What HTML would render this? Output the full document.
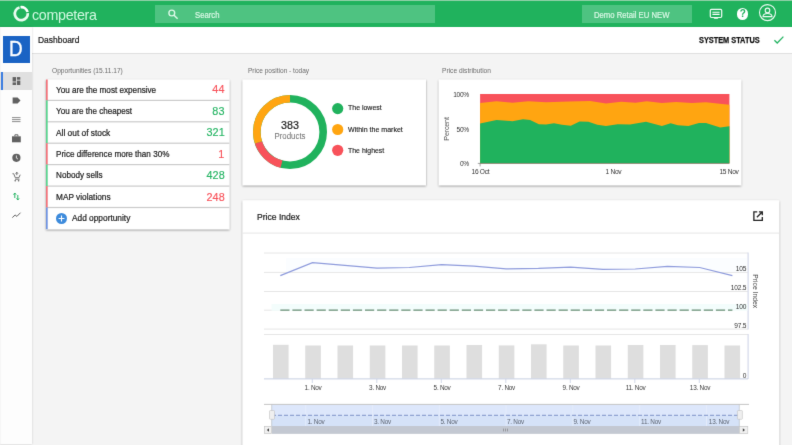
<!DOCTYPE html>
<html lang="en">
<head>
<meta charset="utf-8">
<title>Competera Dashboard</title>
<style>
*{box-sizing:border-box;margin:0;padding:0}
html,body{width:792px;height:445px;overflow:hidden;background:#f4f4f4;font-family:"Liberation Sans",sans-serif;color:#212121}
#app{position:absolute;left:0;top:0;width:792px;height:445px;overflow:hidden;background:#f4f4f4;will-change:transform;filter:url(#pb)}
.abs{position:absolute}
#top{position:absolute;left:0;top:0;width:792px;height:27px;background:#20b25d}
#top .hl{position:absolute;left:0;top:0;width:792px;height:1px;background:#8fd0a6}
.box{position:absolute;top:4.5px;height:18.5px;background:#4ec381}
.t{position:absolute;white-space:nowrap;line-height:1}
#side{position:absolute;left:0;top:27px;width:32px;height:417px;background:linear-gradient(90deg,#f3f3f3 0,#fdfdfd 1.5px);box-shadow:0 0 2px rgba(0,0,0,.18)}
#sub{position:absolute;left:32px;top:27px;width:760px;height:27px;background:#fff;border-bottom:1px solid #e0e0e0}
.card{position:absolute}
#bg{position:absolute;left:0;top:0}
.lab{position:absolute;font-size:7.3px;color:#6c6c6c;white-space:nowrap;line-height:1;transform:scaleX(.92);transform-origin:0 0;margin-top:-.8px}
.row{position:absolute;left:0;width:184px;height:21.45px}
.row span{-webkit-text-stroke:.22px #1c1c1c;position:absolute;left:9.600px;top:6.5px;font-size:9.1px;line-height:1;white-space:nowrap;color:#1c1c1c;transform:scaleX(.895);transform-origin:0 0}
.row b{-webkit-text-stroke:.15px;position:absolute;right:5.4px;top:5.3px;font-size:11.2px;font-weight:normal;line-height:1;white-space:nowrap;transform:scaleX(.97);transform-origin:100% 0}
.r{color:#f8525a}.g{color:#25b463}
.lg{-webkit-text-stroke:.15px #1c1c1c;position:absolute;left:105px;font-size:7.8px;color:#1c1c1c;transform:scaleX(.905);transform-origin:0 0;white-space:nowrap;line-height:1}
</style>
</head>
<body>
<svg width="0" height="0" style="position:absolute"><defs><filter id="pb" x="0" y="0" width="100%" height="100%" color-interpolation-filters="sRGB"><feConvolveMatrix order="3" kernelMatrix="0.0074 0.0713 0.0074 0.0713 0.6853 0.0713 0.0074 0.0713 0.0074" edgeMode="duplicate" preserveAlpha="true"/></filter></defs></svg>
<div id="app">
<div id="top"><div class="hl"></div>
  <svg class="abs" style="left:11px;top:3px" width="21" height="21" viewBox="0 0 21 21"><g transform="translate(10.3 10.7)" fill="none" stroke-width="2.700"><path d="M-1.79 -6.25 A6.5 6.5 0 1 0 6.47 -.63" stroke="#e9fbf0"/><path d="M-.79 -6.45 A6.5 6.5 0 0 1 6.28 -1.68" stroke="#fff"/></g></svg>
  <div class="t" style="left:31.700px;top:7.700px;font-size:14.200px;color:#d0f8e0;letter-spacing:-.3px;transform:scaleX(1.005);transform-origin:0 0">competera</div>
  <div class="box" style="left:155px;width:279.5px"></div>
  <svg class="abs" style="left:165.600px;top:7px" width="14" height="14" viewBox="0 0 14 14"><circle cx="5.800" cy="6" r="2.900" fill="none" stroke="#dcf8e7" stroke-width="1.400"/><path d="M8 8.200l3.600 3.600" stroke="#dcf8e7" stroke-width="1.500" fill="none"/></svg>
  <div class="t" style="left:194.8px;top:11.3px;font-size:8.3px;color:#dcf8e7;-webkit-text-stroke:.18px #dcf8e7;transform:scaleX(.93);transform-origin:0 0">Search</div>
  <div class="box" style="left:582px;width:110px"></div>
  <div class="t" style="left:593.6px;top:11.100px;font-size:8.3px;color:#dcf8e7;-webkit-text-stroke:.18px #dcf8e7;transform:scaleX(.93);transform-origin:0 0">Demo Retail EU NEW</div>
  <svg class="abs" style="left:708px;top:7px" width="16" height="14" viewBox="0 0 16 14"><rect x="2.3" y="2.3" width="11.4" height="8.2" rx="1.2" fill="none" stroke="#f4fcf7" stroke-width="1.2"/><path d="M4.4 5.2h7.2M4.4 7.4h7.2" stroke="#fff" stroke-width="1.1"/><path d="M5.6 11.2h4.8l-.8.9h-3.200z" fill="#fff"/></svg>
  <div class="abs" style="left:736.8px;top:8.200px;width:11.4px;height:11.4px;border-radius:50%;background:#fff"></div>
  <div class="t" style="left:739.700px;top:9px;font-size:10px;font-weight:bold;color:#20b25d">?</div>
  <svg class="abs" style="left:758px;top:3px" width="19" height="19" viewBox="0 0 19 19"><circle cx="9.5" cy="9.600" r="8" fill="none" stroke="#eefaf3" stroke-width="1.1"/><circle cx="9.5" cy="7.400" r="2.300" fill="none" stroke="#eefaf3" stroke-width="1.1"/><path d="M5 13.600c0-2.300 2.200-3.100 4.500-3.100s4.500.8 4.500 3.100z" fill="none" stroke="#eefaf3" stroke-width="1.1"/></svg>
</div>

<div id="sub">
  <div class="t" style="left:5.500px;top:9.200px;font-size:9.200px;color:#1a1a1a;-webkit-text-stroke:.22px #1a1a1a;transform:scaleX(.92);transform-origin:0 0">Dashboard</div>
  <div class="t" style="left:666.500px;top:8.800px;font-size:8.500px;font-weight:bold;color:#111;-webkit-text-stroke:.25px #111;transform:scaleX(.865);transform-origin:0 0">SYSTEM STATUS</div>
  <svg class="abs" style="left:741px;top:8px" width="12" height="10" viewBox="0 0 12 10"><path d="M1.400 5.200l2.800 2.800L10.400 1.600" fill="none" stroke="#25b463" stroke-width="1.300"/></svg>
</div>

<div id="side">
  <div class="abs" style="left:3px;top:9.400px;width:27px;height:26.400px;background:#1a63c4"></div>
  <div class="t" style="left:9px;top:11.100px;font-size:22.500px;color:#fff;-webkit-text-stroke:.35px #fff;transform:scaleX(.84);transform-origin:0 0">D</div>
  <div class="abs" style="left:0;top:44.700px;width:32px;height:18.700px;background:#e0e0e0"></div>
  <div class="abs" style="left:.6px;top:44.700px;width:2.200px;height:18.700px;background:#3c7de0"></div>
  <svg class="abs" style="left:0;top:0" width="32" height="416" viewBox="0 27 32 416">
    <g fill="#616161">
      <rect x="12.600" y="77.100" width="3.400" height="4.400"/><rect x="16.900" y="77.100" width="3.400" height="2.600"/><rect x="12.600" y="82.400" width="3.400" height="2.600"/><rect x="16.900" y="80.600" width="3.400" height="4.400"/>
      <path d="M12.600 97.400h5l2.900 3.100-2.900 3.100h-5z"/>
      <rect x="12" y="117.200" width="8.500" height=".9" opacity=".8"/><rect x="12" y="119.200" width="8.500" height=".9" opacity=".8"/><rect x="12" y="121.200" width="8.500" height=".9" opacity=".8"/>
      <path d="M12 136.300h8.800v6H12z"/><path d="M14.900 136.300v-1.500h3v1.500" fill="none" stroke="#616161" stroke-width="1"/>
      <circle cx="16.400" cy="157.800" r="4.100"/>
    </g>
    <path d="M16.400 155.500v2.600l1.600 1" stroke="#fff" stroke-width=".8" fill="none"/>
    <path d="M12.500 173.700h1.200l1.600 4h3.600l1.300-3M15 179.200h4.500M16.800 172.200v3M15.600 173.700l1.200-1.400 1.200 1.400" stroke="#616161" stroke-width=".9" fill="none"/>
    <circle cx="15.200" cy="180.800" r=".8" fill="#616161"/><circle cx="18.600" cy="180.800" r=".8" fill="#616161"/>
    <path d="M14.800 193.200v4.800M13.500 194.600l1.300-1.600 1.300 1.600M17.800 195v4.800M16.500 198.400l1.300 1.600 1.300-1.600" stroke="#25b463" stroke-width="1" fill="none"/>
    <path d="M12.300 217.600l2.800-2.600 1.800 1.400 3.600-3.700" stroke="#616161" stroke-width="1" fill="none"/>
  </svg>
</div>

<svg id="bg" width="792" height="445" viewBox="0 0 792 445">
  <defs><filter id="sh" x="-5%" y="-5%" width="110%" height="115%"><feGaussianBlur in="SourceAlpha" stdDeviation=".9"/><feOffset dy=".7"/><feComponentTransfer><feFuncA type="linear" slope=".42"/></feComponentTransfer><feMerge><feMergeNode/><feMergeNode in="SourceGraphic"/></feMerge></filter></defs>
  <g fill="#fff" filter="url(#sh)">
    <rect x="46" y="79.500" width="183.400" height="149.700"/>
    <rect x="242.600" y="79.500" width="183.400" height="105.700"/>
    <rect x="438.800" y="79.500" width="302.400" height="105.700"/>
    <rect x="242.600" y="200.300" width="536.500" height="260"/>
  </g>
  <g fill="#cbcbcb"><rect x="46" y="99.800" width="183.400" height="1.200"/><rect x="46" y="121.200" width="183.400" height="1.200"/><rect x="46" y="142.600" width="183.400" height="1.200"/><rect x="46" y="164" width="183.400" height="1.200"/><rect x="46" y="185.500" width="183.400" height="1.200"/><rect x="46" y="206.900" width="183.400" height="1.200"/></g>
  <rect x="46" y="79.500" width="1.700" height="20.900" fill="#f2727a"/>
  <rect x="46" y="100.400" width="1.700" height="42.800" fill="#5ad48f"/>
  <rect x="46" y="143.200" width="1.700" height="21.400" fill="#f2727a"/>
  <rect x="46" y="164.600" width="1.700" height="21.500" fill="#5ad48f"/>
  <rect x="46" y="186.100" width="1.700" height="21.400" fill="#f2727a"/>
  <rect x="46" y="207.500" width="1.700" height="21.700" fill="#6f93e2"/>
  <rect x="242.600" y="232.600" width="536.500" height="1" fill="#e6e6e6"/>
</svg>

<div class="lab" style="left:52px;top:68px;transform:scaleX(.906)">Opportunities (15.11.17)</div>
<div class="card" style="left:46px;top:79.200px;width:184px;height:150px">
  <div class="row" style="top:0.0px"><span style="transform:scaleX(0.895)">You are the most expensive</span><b class="r">44</b></div>
  <div class="row" style="top:21.45px"><span style="transform:scaleX(0.888)">You are the cheapest</span><b class="g">83</b></div>
  <div class="row" style="top:42.9px"><span style="transform:scaleX(0.918)">All out of stock</span><b class="g">321</b></div>
  <div class="row" style="top:64.35px"><span style="transform:scaleX(0.891)">Price difference more than 30%</span><b class="r">1</b></div>
  <div class="row" style="top:85.8px"><span style="transform:scaleX(0.895)">Nobody sells</span><b class="g">428</b></div>
  <div class="row" style="top:107.25px"><span style="transform:scaleX(0.91)">MAP violations</span><b class="r">248</b></div>
  <div class="row" style="top:128.700px;height:21.300px">
    <div class="abs" style="left:9.500px;top:4.800px;width:11.400px;height:11.400px;border-radius:50%;background:#3d8bdc"></div>
    <svg class="abs" style="left:9.700px;top:5px" width="11" height="11" viewBox="0 0 11 11"><path d="M5.500 2.600v5.800M2.600 5.500h5.800" stroke="#fff" stroke-width="1.100"/></svg>
    <span style="left:26.200px;top:6.300px;transform:scaleX(.915)">Add opportunity</span></div>
</div>

<div class="lab" style="left:248px;top:68px;transform:scaleX(.897)">Price position - today</div>
<div class="card" style="left:243px;top:79.200px;width:183px;height:106.500px">
  <svg class="abs" style="left:0;top:0" width="183" height="106" viewBox="243 79 183 106">
    <g fill="none" stroke-width="7.600" transform="rotate(-90 290 132)">
      <circle cx="290" cy="132" r="33.200" stroke="#20b25d"/>
      <circle cx="290" cy="132" r="33.200" stroke="#f8525a" stroke-dasharray="32.850 500" stroke-dashoffset="-112.760"/>
      <circle cx="290" cy="132" r="33.200" stroke="#ffa511" stroke-dasharray="63 500" stroke-dashoffset="-145.610"/>
    </g>
    <circle cx="337.700" cy="108.600" r="5.600" fill="#20b25d"/>
    <circle cx="337.700" cy="129.500" r="5.600" fill="#ffa511"/>
    <circle cx="337.700" cy="150.300" r="5.600" fill="#f8525a"/>
  </svg>
  <div class="t" style="left:27px;top:40.600px;width:40px;text-align:center;font-size:11.2px;color:#1c1c1c;-webkit-text-stroke:.2px #1c1c1c;transform:scaleX(.96)">383</div>
  <div class="t" style="left:22px;top:53px;width:50px;text-align:center;font-size:8.3px;color:#6c6c6c;transform:scaleX(.95)">Products</div>
  <div class="lg" style="top:25.200px;transform:scaleX(.893)">The lowest</div>
  <div class="lg" style="top:46.800px;transform:scaleX(.903)">Within the market</div>
  <div class="lg" style="top:67.700px;transform:scaleX(.89)">The highest</div>
</div>

<div class="lab" style="left:442px;top:68px;transform:scaleX(.908)">Price distribution</div>
<div class="card" style="left:439px;top:79.200px;width:302.500px;height:106.500px">
  <svg class="abs" style="left:0;top:0" width="302" height="106" viewBox="439 79 302 106" font-family="Liberation Sans, sans-serif">
    <rect x="480.100" y="94" width="249.300" height="69.200" fill="#f8525a"/>
    <path d="M480.1 103.0 L496.5 101.3 L512.4 102.7 L528.3 101.3 L546 102.3 L569 101.4 L590.2 100.9 L606 103.5 L621.2 101.8 L635.4 102.7 L646.8 101.3 L661.9 103.0 L676 102.1 L691.9 103 L706 102.3 L722 104.1 L729.4 104.8 V163.2 H480.1z" fill="#ffa511"/>
    <path d="M480.1 123.4 L496.5 120 L512.4 121.2 L523 119.3 L530.1 120 L538.9 124.2 L546 124.6 L554 123.2 L561.9 124.8 L570.8 125.7 L579.6 121.6 L588.4 121.8 L597.3 124.8 L606 126.1 L617.7 124.2 L630 124.6 L646 121.8 L661.9 126 L670.7 123.2 L677.8 125.3 L688.4 126 L699 123 L706 123 L720.2 127.4 L729.4 126.2 V163.2 H480.1z" fill="#20b25d"/>
    <path d="M477.800 163.400h251.600M480.100 163.400v3" stroke="#666" stroke-width=".6" fill="none"/>
    <g font-size="6.600" fill="#333" letter-spacing="-.3">
    <text x="468.900" y="97.200" text-anchor="end">100%</text>
    <text x="468.900" y="131.700" text-anchor="end">50%</text>
    <text x="468.900" y="166.100" text-anchor="end">0%</text>
    <text x="480.400" y="174.200" text-anchor="middle">16 Oct</text>
    <text x="613.400" y="174.200" text-anchor="middle">1 Nov</text>
    <text x="729" y="174.200" text-anchor="middle">15 Nov</text>
    <text x="448.900" y="129" text-anchor="middle" font-size="7.200" fill="#555" letter-spacing="-.2" transform="rotate(-90 448.900 129)">Percent</text>
    </g>
  </svg>
</div>

<div class="card" style="left:242px;top:201px;width:537px;height:260px">
  <div class="t" style="left:14.900px;top:11.500px;font-size:9.200px;color:#1a1a1a;-webkit-text-stroke:.22px #1a1a1a;transform:scaleX(.932);transform-origin:0 0">Price Index</div>
  <svg class="abs" style="left:510.200px;top:8.800px" width="12.200" height="12.200" viewBox="0 0 13 13"><path d="M5.600 2H2v9h9V7.400" fill="none" stroke="#222" stroke-width="1.400"/><path d="M7.400 2H11v3.600M10.800 2.200L5.200 7.800" fill="none" stroke="#222" stroke-width="1.400"/></svg>
  
  <svg class="abs" style="left:0;top:0" width="537" height="245" viewBox="242 201 537 245" font-family="Liberation Sans, sans-serif">
    <g stroke="#e6e6e6" stroke-width="1" fill="none">
      <path d="M264 253h484M264 272.400h484M264 291.500h484M264 310.200h16M264 329.100h484"/>
      <path d="M264 334.500h484"/>
    </g>
    <path d="M748.100 252.500v77M748.100 334v45" stroke="#d5d9ea" stroke-width="1.200" fill="none"/>
    <rect x="271.500" y="304" width="476" height="6.800" fill="#f3fdfc"/><rect x="286" y="258" width="461" height="14" fill="#fbfdff"/>
    <path d="M280.300 310.200h452.100" stroke="#668c72" stroke-width="1.200" stroke-dasharray="9.200 2.900" fill="none"/>
    <path d="M280.300 275.600 L312.500 262.700 L344.800 265.300 L377 268.200 L409.300 267.500 L441.600 264.600 L473.800 266.200 L506.100 268.800 L538.400 268.400 L570.600 267.200 L602.900 269.300 L635.200 269 L667.400 266.400 L699.700 267.500 L732.400 275.600" stroke="#8e9bdc" stroke-width="1.250" fill="none"/>
    <g fill="#dedede"><rect x="273.00" y="344.8" width="15.6" height="33.8"/><rect x="305.25" y="345.5" width="15.6" height="33.1"/><rect x="337.50" y="345.5" width="15.6" height="33.1"/><rect x="369.75" y="345.5" width="15.6" height="33.1"/><rect x="402.00" y="345.5" width="15.6" height="33.1"/><rect x="434.25" y="345.5" width="15.6" height="33.1"/><rect x="466.50" y="345.0" width="15.6" height="33.6"/><rect x="498.75" y="345.4" width="15.6" height="33.2"/><rect x="531.00" y="344.3" width="15.6" height="34.3"/><rect x="563.25" y="345.5" width="15.6" height="33.1"/><rect x="595.50" y="345.5" width="15.6" height="33.1"/><rect x="627.75" y="345.0" width="15.6" height="33.6"/><rect x="660.00" y="345.0" width="15.6" height="33.6"/><rect x="692.25" y="345.1" width="15.6" height="33.5"/><rect x="724.50" y="345.5" width="15.6" height="33.1"/></g>
    <path d="M264 378.900h484" stroke="#c6cee2" stroke-width="1"/>
    <g stroke="#c6cee2" stroke-width=".8"><path d="M312.300 379v4M376.800 379v4M441.300 379v4M505.800 379v4M570.300 379v4M634.800 379v4M699.300 379v4"/></g>
    <g font-size="6.400" fill="#3a3a3a" text-anchor="middle" letter-spacing="-.25">
      <text x="313.100" y="389.500">1. Nov</text><text x="377.600" y="389.500">3. Nov</text><text x="442.100" y="389.500">5. Nov</text><text x="506.600" y="389.500">7. Nov</text><text x="571.100" y="389.500">9. Nov</text><text x="635.600" y="389.500">11. Nov</text><text x="700" y="389.500">13. Nov</text>
    </g>
    <g font-size="6.600" fill="#333" text-anchor="end" letter-spacing="-.18">
      <text x="746.300" y="270.900">105</text><text x="746.300" y="290.200">102.5</text><text x="746.300" y="309">100</text><text x="746.300" y="327.900">97.5</text><text x="746.300" y="377.600">0</text>
    </g>
    <text x="753" y="291.200" font-size="6.800" fill="#444" text-anchor="middle" transform="rotate(90 753 291.200)">Price Index</text>
    <rect x="271.700" y="404.500" width="467.600" height="21.600" fill="#dde7fb"/><rect x="271.700" y="415.300" width="467.600" height="10.800" fill="#d5e2f8"/><path d="M305.7 404.500v21.500M372.5 404.500v21.500M439.3 404.500v21.500M506.1 404.500v21.500M572.9 404.500v21.500M639.7 404.500v21.500M706.5 404.500v21.500" stroke="#e6edfb" stroke-width=".8" fill="none"/><path d="M271.700 404.500v21.500M739.300 404.500v21.500" stroke="#b4b8c0" stroke-width=".6" fill="none"/>
    <path d="M264 404.400h485" stroke="#bdbdbd" stroke-width=".9"/>
    <path d="M272 415.300h467" stroke="#7f93c8" stroke-width="1" stroke-dasharray="4 2" fill="none"/>
    <g font-size="6.400" fill="#5c6472" text-anchor="middle" letter-spacing="-.25">
      <text x="316" y="424.200">1. Nov</text><text x="382.500" y="424.200">3. Nov</text><text x="449" y="424.200">5. Nov</text><text x="515.500" y="424.200">7. Nov</text><text x="582" y="424.200">9. Nov</text><text x="651" y="424.200">11. Nov</text><text x="719" y="424.200">13. Nov</text>
    </g>
    <rect x="264" y="426" width="484" height="7.800" fill="#ececec"/>
    <rect x="271.700" y="426" width="467.600" height="7.800" fill="#c3c8d2"/>
    <rect x="264.300" y="426.300" width="7.400" height="7.400" fill="#f0f0f0" stroke="#c4c4c4" stroke-width=".6"/>
    <rect x="739.600" y="426.300" width="8.200" height="7.400" fill="#f0f0f0" stroke="#c4c4c4" stroke-width=".6"/>
    <path d="M269 428.300l-2.200 1.700 2.200 1.700z" fill="#444"/><path d="M742.800 428.300l2.200 1.700-2.200 1.700z" fill="#444"/>
    <path d="M503.500 428.600v2.800M505.500 428.600v2.800M507.500 428.600v2.800" stroke="#777" stroke-width=".6"/>
    <rect x="269.500" y="410.500" width="5" height="8.800" fill="#efefef" stroke="#b8b8b8" stroke-width=".5" rx=".8"/>
    <rect x="737.400" y="410.500" width="5" height="8.800" fill="#efefef" stroke="#b8b8b8" stroke-width=".5" rx=".8"/>
  </svg>
</div>
</div>
</body>
</html>
